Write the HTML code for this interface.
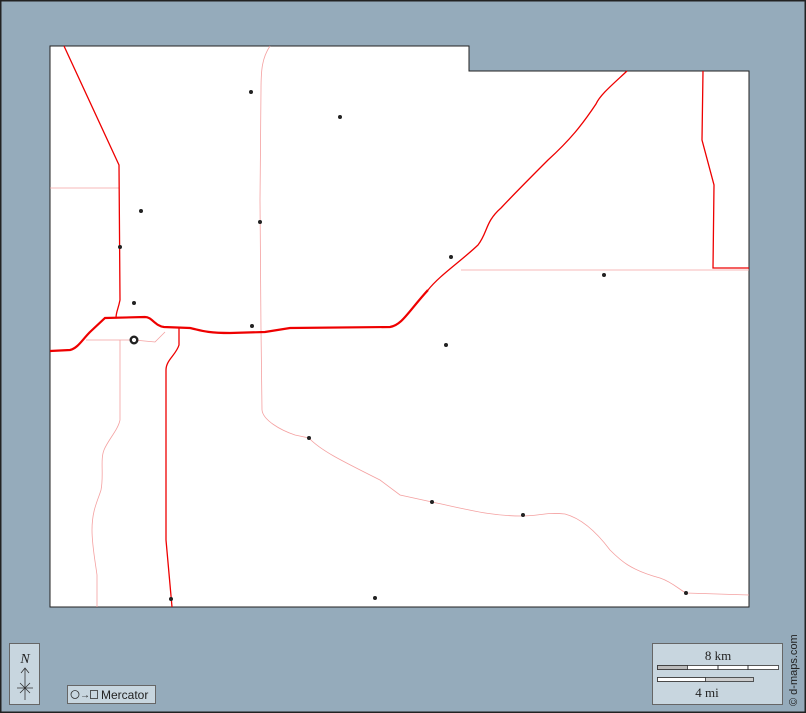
<!DOCTYPE html>
<html><head><style>
html,body{margin:0;padding:0;background:#95abbb;}
svg{display:block;}
</style></head><body>
<svg width="806" height="713" viewBox="0 0 806 713" xmlns="http://www.w3.org/2000/svg">
<rect x="0.5" y="0.5" width="805" height="712" fill="#95abbb" stroke="#222" stroke-width="2"/>
<polygon points="50,46 469,46 469,71 749,71 749,607 50,607" fill="#fff" stroke="#222" stroke-width="1"/>
<g fill="none" stroke="#f4a0a0" stroke-width="0.8">
<path d="M50,188 H119"/>
<path d="M461,270 H749"/>
<path d="M270,46 C262,58 261,70 261,90 L260,200 L261,330 L262,410 C263,420 280,430 295,435 L309,438 C320,450 340,460 380,480 L400,495 L432,502 C470,510 490,516 522,516 C540,516 545,512 565,514 C580,518 595,530 610,550 C620,560 630,570 660,578 C672,582 680,590 686,593 L749,595"/>
<path d="M86,340 L134,340 L155,342 L165,332"/>
<path d="M120,340 V420 C118,430 108,440 104,450 C100,460 104,475 101,490 C98,500 92,510 92,530 C92,545 95,560 97,575 V607"/>
</g>
<g fill="none" stroke="#e00" stroke-width="1.3">
<path d="M64,46 L119,165 L120,300 C118,310 116,312 116,318"/>
<path d="M179,328 L179,345 C176,355 166,360 166,370 L166,540 L172,607"/>
<path d="M627,71 C612,85 600,95 596,104 C582,125 570,140 548,160 C530,178 516,192 501,208 C485,222 488,232 478,245 C460,262 440,275 428,290"/>
<path d="M703,71 L702,140 L714,185 L713,268 L749,268"/>
</g>
<path d="M50,351 L70,350 C78,348 82,340 90,332 L105,318 L145,317 C152,317 155,326 164,327 L190,328 C200,330 205,333 230,333 L265,332 L290,328 L390,327 C402,325 408,312 428,290" fill="none" stroke="#e00" stroke-width="2.2"/>
<g fill="#222">
<circle cx="251" cy="92" r="2"/><circle cx="340" cy="117" r="2"/><circle cx="141" cy="211" r="2"/>
<circle cx="260" cy="222" r="2"/><circle cx="120" cy="247" r="2"/><circle cx="451" cy="257" r="2"/>
<circle cx="604" cy="275" r="2"/><circle cx="134" cy="303" r="2"/><circle cx="252" cy="326" r="2"/>
<circle cx="446" cy="345" r="2"/><circle cx="309" cy="438" r="2"/><circle cx="432" cy="502" r="2"/>
<circle cx="523" cy="515" r="2"/><circle cx="171" cy="599" r="2"/><circle cx="375" cy="598" r="2"/>
<circle cx="686" cy="593" r="2"/>
</g>
<circle cx="134" cy="340" r="3.3" fill="#fff" stroke="#222" stroke-width="2.4"/>
<rect x="9.5" y="643.5" width="30" height="61" fill="#c8d6df" stroke="#666"/>
<text x="25" y="663" font-family="Liberation Serif" font-style="italic" font-size="14" text-anchor="middle" fill="#222">N</text>
<path d="M25,668 V700 M21,673 L25,668 L29,673 M17,688 H33 M20,683 L30,693 M30,683 L20,693" stroke="#333" stroke-width="0.8" fill="none"/>
<rect x="67.5" y="685.5" width="88" height="18" fill="#c8d6df" stroke="#666"/>
<circle cx="75" cy="694.5" r="4" fill="none" stroke="#333" stroke-width="0.8"/>
<text x="80" y="698" font-family="Liberation Sans" font-size="10" fill="#222">→</text>
<rect x="90.5" y="690.5" width="7" height="8" fill="none" stroke="#333" stroke-width="0.8"/>
<text x="101" y="699" font-family="Liberation Sans" font-size="12" fill="#222">Mercator</text>
<rect x="652.5" y="643.5" width="130" height="61" fill="#c8d6df" stroke="#666"/>
<text x="718" y="660" font-family="Liberation Serif" font-size="13" text-anchor="middle" fill="#222">8 km</text>
<rect x="657.5" y="665.5" width="121" height="4" fill="#fff" stroke="#333" stroke-width="0.8"/>
<rect x="657.5" y="665.5" width="30" height="4" fill="#bbb" stroke="#333" stroke-width="0.8"/>
<path d="M718,665 V670 M748,665 V670" stroke="#333"/>
<rect x="657.5" y="677.5" width="96" height="4" fill="#ccc" stroke="#333" stroke-width="0.8"/>
<rect x="657.5" y="677.5" width="48" height="4" fill="#fff" stroke="#333" stroke-width="0.8"/>
<text x="707" y="697" font-family="Liberation Serif" font-size="13" text-anchor="middle" fill="#222">4 mi</text>
<text transform="translate(797,706) rotate(-90)" font-family="Liberation Sans" font-size="11" fill="#222">© d-maps.com</text>
</svg>
</body></html>
